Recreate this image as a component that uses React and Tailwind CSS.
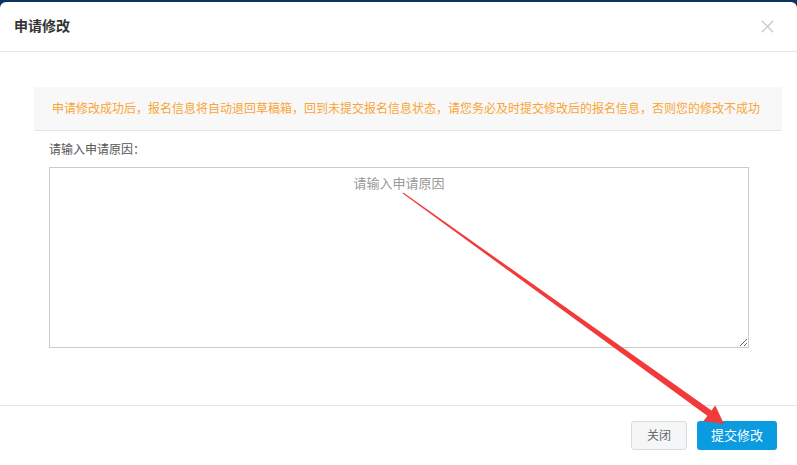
import React from 'react';
import { X } from 'lucide-react';

const font = { fontFamily: '"Liberation Sans", "Noto Sans CJK SC", sans-serif' };

const App = () => {
  return (
    <div className="relative h-[465px] w-[797px] overflow-hidden bg-[#0b3463] pt-[2px]" style={font}>
      <div className="flex h-full flex-col rounded-t-[6px] bg-white">
        {/* Header */}
        <div className="flex h-[50px] shrink-0 items-center justify-between border-b border-[#e5e5e5] pl-[14px] pr-[19px]">
          <h3 className="text-[14px] font-bold text-[#333]">申请修改</h3>
          <X className="h-[21px] w-[21px] text-[#c4c4c4]" strokeWidth={1.4} />
        </div>

        {/* Body */}
        <div className="flex-1 pl-[34px] pr-[15px] pt-[35px]">
          <div className="flex h-[44px] items-center border-b border-[#e6e6e6] bg-[#f8f8f8] pl-[18px]">
            <p className="text-[12px] text-[#f8a537]">
              申请修改成功后，报名信息将自动退回草稿箱，回到未提交报名信息状态，请您务必及时提交修改后的报名信息，否则您的修改不成功
            </p>
          </div>
          <div className="pl-[15px] pt-[10px]">
            <label className="block text-[12px] leading-[18px] text-[#555]">请输入申请原因：</label>
            <textarea
              placeholder="请输入申请原因"
              className="mt-[8px] block h-[181px] w-[700px] border border-[#ccc] px-2 py-[7px] text-center text-[13px] leading-[18px] text-[#333] outline-none placeholder:text-[#999]"
            />
          </div>
        </div>

        {/* Footer */}
        <div className="flex h-[60px] shrink-0 items-start justify-end gap-[10px] border-t border-[#e5e5e5] pr-[20px] pt-[15px]">
          <button className="h-[29px] w-[56px] rounded-[3px] border border-[#dcdcdc] bg-[#f5f6f8] text-[12px] text-[#666]">
            关闭
          </button>
          <button className="h-[29px] w-[80px] rounded-[3px] bg-[#0a9be0] text-[13px] text-white">
            提交修改
          </button>
        </div>
      </div>

      {/* Annotation arrow */}
      <svg className="pointer-events-none absolute left-0 top-0" width="797" height="465">
        <polygon points="403.3,192.6 402.7,193.4 707.6,416.1 712.2,410.9" fill="#f23a3a" />
        <polygon points="724,424 703.5,421 715.3,405.5" fill="#f23a3a" />
      </svg>
    </div>
  );
};

export default App;
